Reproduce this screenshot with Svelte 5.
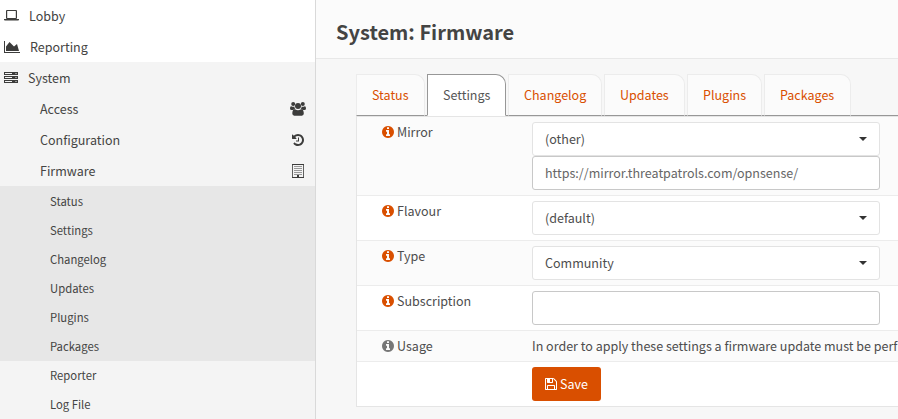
<script>
  const top = [
    { name: 'Lobby', icon: 'laptop', gap: 29 },
    { name: 'Reporting', icon: 'chart', gap: 30 },
    { name: 'System', icon: 'server', gap: 28 }
  ];
  const sections = [
    { name: 'Access', icon: 'users' },
    { name: 'Configuration', icon: 'history' },
    { name: 'Firmware', icon: 'building' }
  ];
  const pages = ['Status', 'Settings', 'Changelog', 'Updates', 'Plugins', 'Packages'];
  const more = ['Reporter', 'Log File'];
  const tabs = [
    { name: 'Status', w: 69 },
    { name: 'Settings', w: 79 },
    { name: 'Changelog', w: 94 },
    { name: 'Updates', w: 81 },
    { name: 'Plugins', w: 75 },
    { name: 'Packages', w: 87 }
  ];
  const rows = [
    { label: 'Mirror', select: '(other)', input: 'https://mirror.threatpatrols.com/opnsense/', h: 79 },
    { label: 'Flavour', select: '(default)', h: 45 },
    { label: 'Type', select: 'Community', h: 45 },
    { label: 'Subscription', input: '', h: 45 },
    { label: 'Usage', text: 'In order to apply these settings a firmware update must be perf', h: 31 },
    { save: true, h: 44 }
  ];
</script>

{#snippet icon(name)}
  {#if name === 'laptop'}
    <svg width="15" height="11" viewBox="0 0 15 11"><path fill-rule="evenodd" d="M3 0h9q1 0 1 1v7q0 1-1 1H3q-1 0-1-1V1q0-1 1-1zm.2 1v7h8.600V1zM0 9h15v.7q0 .8-1 .8H1q-1 0-1-.8z" /></svg>
  {:else if name === 'chart'}
    <svg width="16" height="12" viewBox="0 128 2048 1536"><path d="M2048 1536v128h-2048v-1536h128v1408h1920zM1664 512l256 896h-1664v-576l448-576 576 576z" /></svg>
  {:else if name === 'server'}
    <svg width="14" height="11" viewBox="0 0 14 11"><path fill-rule="evenodd" d="M0 0h14v3H0zm1 1v1h7V1zm10.500 0v1h1V1zM0 4h14v3H0zm1 1v1h7V5zm10.500 0v1h1V5zM0 8h14v3H0zm1 1v1h7V9zm10.500 0v1h1V9z" /></svg>
  {:else if name === 'users'}
    <svg width="16" height="14" viewBox="0 0 16 14"><circle cx="3.200" cy="2.100" r="2" /><circle cx="12.800" cy="2.100" r="2" /><circle cx="8" cy="4" r="3" /><path d="M1.200 4.200q2 1.100 3.200.3Q4.400 6.300 5.200 7 3.700 7 3 8H1.600Q0 8 0 6.500q0-2.200 1.200-2.300zM14.800 4.200q-2 1.100-3.200.3 0 1.800-.8 2.500Q12.300 7 13 8h1.400Q16 8 16 6.500q0-2.200-1.200-2.300zM5 7.300q3 2 6 0 2.800 0 2.800 4.300 0 2-2 2.100H4.300q-2-.1-2-2.100Q2.300 7.300 5 7.300z" /></svg>
  {:else if name === 'history'}
    <svg width="12" height="12" viewBox="0 128 1536 1536"><path d="M1536 896q0 156-61 298t-164 245-245 164-298 61q-172 0-327-72.500t-264-204.500q-7-10-6.500-22.500t8.500-20.500l137-138q10-9 25-9 16 2 23 12 73 95 179 147t225 52q104 0 198.500-40.500t163.500-109.500 109.500-163.500 40.500-198.500-40.500-198.500-109.500-163.500-163.500-109.500-198.500-40.500q-98 0-188 35.500t-160 101.500l137 138q31 30 14 69-17 40-59 40h-448q-26 0-45-19t-19-45v-448q0-42 40-59 39-17 69 14l130 129q107-101 244.500-156.500t284.500-55.500q156 0 298 61t245 164 164 245 61 298zm-640-288v448q0 14-9 23t-23 9h-320q-14 0-23-9t-9-23v-64q0-14 9-23t23-9h224v-352q0-14 9-23t23-9h64q14 0 23 9t9 23z" /></svg>
  {:else if name === 'building'}
    <svg width="12" height="14" viewBox="0 0 12 14"><path d="M0 0h12v1H0zM0 13h5v-2h2v2h5v1H0z" /><path opacity=".8" d="M0 1h1v12H0zM11 1h1v12h-1z" /><path opacity=".5" d="M2 2h8v1H2zM2 4h8v1H2zM2 6h8v1H2zM2 8h8v1H2zM2 10h8v1H2z" /></svg>
  {:else if name === 'info'}
    <svg width="12" height="12" viewBox="0 128 1536 1536"><path d="M1024 1376v-160q0-14-9-23t-23-9h-96v-512q0-14-9-23t-23-9h-320q-14 0-23 9t-9 23v160q0 14 9 23t23 9h96v320h-96q-14 0-23 9t-9 23v160q0 14 9 23t23 9h448q14 0 23-9t9-23zm-128-896v-160q0-14-9-23t-23-9h-192q-14 0-23 9t-9 23v160q0 14 9 23t23 9h192q14 0 23-9t9-23zm640 416q0 209-103 385.500t-279.500 279.500-385.500 103-385.500-103-279.500-279.500-103-385.500 103-385.500 279.500-279.500 385.500-103 385.500 103 279.500 279.500 103 385.500z" /></svg>
  {:else if name === 'save'}
    <svg width="12" height="12" viewBox="0 128 1536 1536"><path d="M384 1536h768v-384h-768v384zm896 0h128v-896q0-14-10-38.500t-20-34.500l-281-281q-10-10-34-20t-39-10v416q0 40-28 68t-68 28h-576q-40 0-68-28t-28-68v-416h-128v1280h128v-416q0-40 28-68t68-28h832q40 0 68 28t28 68v416zm-384-928v-320q0-13-9.500-22.500t-22.500-9.500h-192q-13 0-22.500 9.500t-9.500 22.500v320q0 13 9.500 22.500t22.500 9.500h192q13 0 22.500-9.500t9.500-22.500zm640 32v928q0 40-28 68t-68 28h-1344q-40 0-68-28t-28-68v-1344q0-40 28-68t68-28h928q40 0 88 20t76 48l280 280q28 28 48 76t20 88z" /></svg>
  {/if}
{/snippet}

<div class="app">
  <nav class="sidebar">
    {#each top as t}
      <div class="item" class:open={t.name === 'System'}>
        <span class="lead" style:width="{t.gap - 4}px">{@render icon(t.icon)}</span>
        <span>{t.name}</span>
      </div>
    {/each}
    {#each sections as s}
      <div class="item section"><span>{s.name}</span><span class="trail">{@render icon(s.icon)}</span></div>
    {/each}
    <div class="group">
      {#each pages as p}<div class="sub">{p}</div>{/each}
    </div>
    {#each more as p}<div class="sub">{p}</div>{/each}
  </nav>
  <main>
    <header><h1>System: Firmware</h1></header>
    <div class="content">
      <div class="tabs">
        {#each tabs as t}
          <div class="tab" class:active={t.name === 'Settings'} style:width="{t.w}px">{t.name}</div>
        {/each}
      </div>
      <div class="panel">
        {#each rows as r}
          <div class="row" style:height="{r.h}px">
            <div class="label">
              {#if r.label}
                <span class="info" class:muted={r.label === 'Usage'}>{@render icon('info')}</span>{r.label}
              {/if}
            </div>
            <div class="value">
              {#if r.select}<div class="control">{r.select}<span class="caret"></span></div>{/if}
              {#if r.input !== undefined}<div class="control input">{r.input}</div>{/if}
              {#if r.text}<div class="text">{r.text}</div>{/if}
              {#if r.save}<button>{@render icon('save')}<span>Save</span></button>{/if}
            </div>
          </div>
        {/each}
      </div>
    </div>
  </main>
</div>

<style>
  .app {
    display: flex;
    width: 898px;
    height: 419px;
    overflow: hidden;
    background: #f7f7f7;
    color: #4d4d4d;
    font: 12.53px/20px "Noto Sans CJK SC", "Open Sans", sans-serif;
  }
  svg { display: block; fill: currentColor; }
  .sidebar {
    flex: none;
    box-sizing: border-box;
    width: 316px;
    height: 419px;
    border-right: 1px solid #d9d9d9;
    background: #f4f4f4;
    color: #444443;
    overflow: hidden;
  }
  .sidebar svg { color: #3c3c3b; }
  .item {
    display: flex;
    align-items: center;
    height: 31px;
    padding-left: 4px;
    background: #fff;
  }
  .item.open, .item.section { background: #f4f4f4; }
  .lead { flex: none; }
  .item.section { padding: 0 9px 0 40px; justify-content: space-between; }
  .trail { width: 16px; display: flex; justify-content: center; }
  .group { background: #e7e7e7; padding-top: 1px; }
  .sub { height: 29px; padding-left: 50px; font-size: 11.3px; line-height: 29px; }
  main { flex: 1; min-width: 0; }
  header {
    box-sizing: border-box;
    height: 59px;
    padding: 17px 20px 0;
    border-bottom: 1px solid #e8e8e8;
    background: #fbfbfb;
  }
  h1 { margin: 0; font-size: 20px; line-height: 30px; font-weight: 700; color: #444443; white-space: nowrap; }
  .content { padding: 15px 0 0 40px; }
  .tabs { display: flex; gap: 2px; height: 42px; box-sizing: border-box; border-bottom: 1px solid #979797; }
  .tab {
    flex: none;
    box-sizing: border-box;
    height: 42px;
    border: 1px solid #ececec;
    border-bottom-color: #979797;
    border-radius: 0 10px 0 0;
    background: #fbfbfb;
    color: #d94f00;
    padding-left: 15px;
    line-height: 40px;
  }
  .tab.active { border-color: #979797; border-bottom-color: #fff; background: #fff; color: #555; }
  .panel { border: solid #e5e5e5; border-width: 1px 0 1px 1px; }
  .row { box-sizing: border-box; display: flex; padding-top: 5px; background: #fff; border-bottom: 1px solid #ececec; }
  .row:nth-child(odd) { background: #fbfbfb; }
  .row:last-child { border-bottom: 0; }
  .label { display: flex; align-items: flex-start; box-sizing: border-box; flex: none; width: 175px; padding-left: 25px; }
  .info { margin: 4px 3px 0 0; color: #d94f00; }
  .muted { color: #777; }
  .value { flex: none; width: 348px; }
  .control {
    box-sizing: border-box;
    display: flex;
    align-items: center;
    justify-content: space-between;
    height: 34px;
    padding: 0 12px;
    border: 1px solid #e3e3e3;
    border-radius: 3px;
    background: #fff;
  }
  .input { border-color: #c8c8c8; color: #666; }
  .caret { border: 4px solid transparent; border-top-color: #333; border-bottom: 0; }
  .text { white-space: nowrap; }
  button {
    display: flex;
    align-items: center;
    gap: 3px;
    width: 69px;
    height: 34px;
    padding: 0 0 0 13px;
    border: 0;
    border-radius: 3px;
    background: #d94f00;
    color: #fff;
    font: inherit;
  }
</style>
